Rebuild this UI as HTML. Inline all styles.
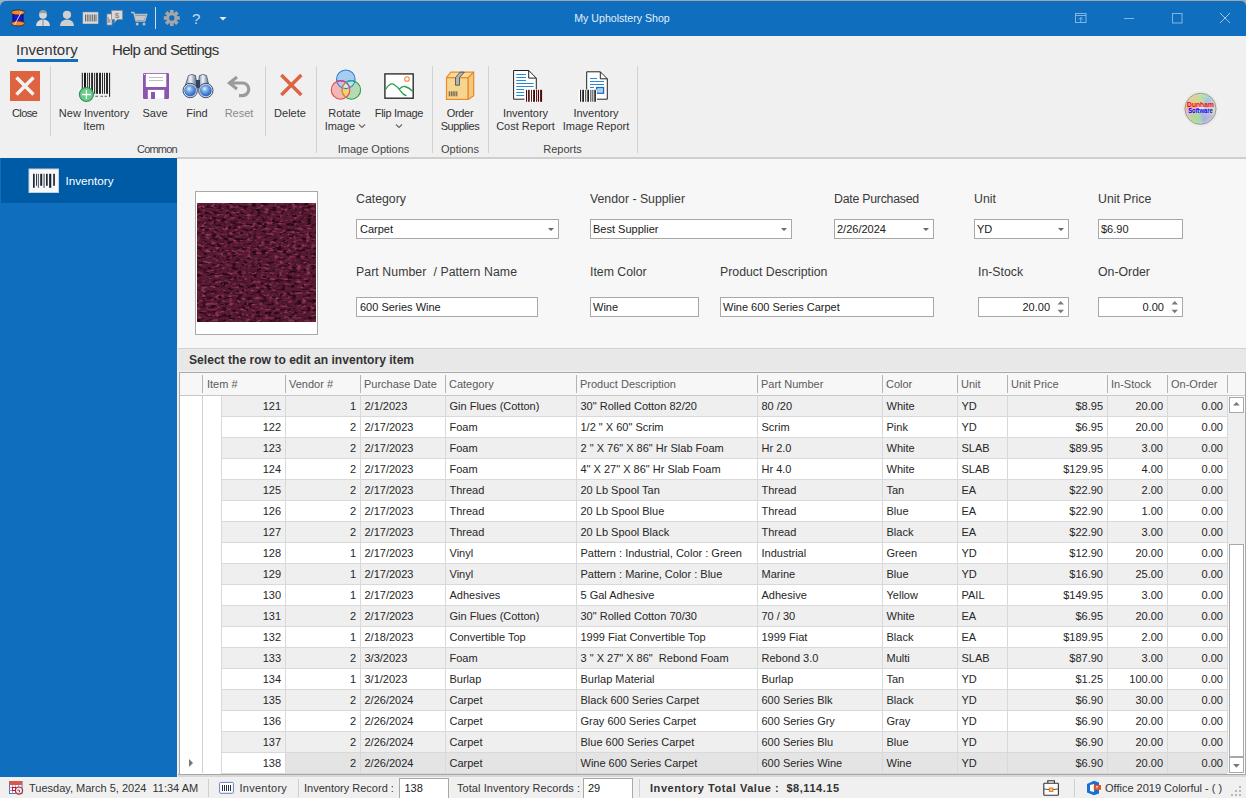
<!DOCTYPE html>
<html><head><meta charset="utf-8">
<style>
*{margin:0;padding:0;box-sizing:border-box}
html,body{width:1246px;height:798px;overflow:hidden;background:#f0f0f0;font-family:"Liberation Sans",sans-serif;font-size:11px;color:#262626;position:relative}
.a{position:absolute;white-space:pre}
</style></head><body>
<div class="a" style="left:0px;top:0px;width:1246px;height:798px;background:#f0f0f0"></div>
<div class="a" style="left:0px;top:0px;width:1246px;height:36px;background:#9ea6b0"></div>
<div class="a" style="left:0px;top:0px;width:8px;height:8px;background:#98b2c8"></div>
<div class="a" style="left:0px;top:1px;width:1246px;height:35px;background:#106ebe;border-radius:6px 5px 0 0"></div>
<div class="a" style="top:10.33px;font-size:10.6px;line-height:16px;color:#e3eefa;left:422px;width:400px;text-align:center;">My Upholstery Shop</div>
<svg class="a" style="left:0;top:0" width="240" height="36" viewBox="0 0 240 36">
<!-- spool -->
<g>
<rect x="13" y="12.5" width="10" height="11" fill="#1414d8" stroke="#000040" stroke-width="0.9"/>
<ellipse cx="18" cy="12.5" rx="6.8" ry="2.5" fill="#f08a3a" stroke="#4a2000" stroke-width="0.8"/>
<ellipse cx="18" cy="23.5" rx="6.8" ry="2.4" fill="#f08a3a" stroke="#4a2000" stroke-width="0.8"/>
</g>
<path d="M14.5 25 L21.5 11.5" stroke="#e8e8f0" stroke-width="0.9"/>
<!-- person 1 -->
<circle cx="43" cy="14.8" r="3.9" fill="#d6d6d6"/>
<path d="M39 13.6 Q39.5 10 43 10 Q46.5 10 47 13.6 Q43 12.2 39 13.6Z" fill="#9c9c9c"/>
<path d="M36 26 Q36.3 20 43 19.6 Q49.7 20 50 26 Z" fill="#dadada"/>
<path d="M42.2 20 h1.6 v6 h-1.6z" fill="#a8a8a8"/>
<!-- person 2 -->
<circle cx="67" cy="14.8" r="4.1" fill="#cfcfcf"/>
<path d="M60 26 Q60.3 20 67 19.6 Q73.7 20 74 26 Z" fill="#cfcfcf"/>
<!-- barcode -->
<rect x="83" y="12.2" width="15" height="11.5" fill="#dcdcdc" stroke="#c4c4c4" stroke-width="0.6"/>
<path d="M85.5 14.5v7M87.3 14.5v7M89 14.5v7M90.8 14.5v7M92.6 14.5v7M94.4 14.5v7M96 14.5v7" stroke="#5e5e5e" stroke-width="0.9"/>
<!-- report $ -->
<path d="M107 14 h5 v11 h-5z" fill="#e0e0e0" stroke="#8a8a8a" stroke-width="0.8"/>
<path d="M108.3 17v6M109.8 19v4" stroke="#6a7a8a" stroke-width="0.8"/>
<path d="M112 24 l3.5 -3" stroke="#3a7ad8" stroke-width="1.2"/>
<path d="M111.5 10.5 h11 v9 h-5 l-3 3 v-3 h-3z" fill="#d8d8d8" stroke="#8a8a8a" stroke-width="0.8"/>
<text x="117" y="18" font-size="8" fill="#777" text-anchor="middle" font-family="Liberation Sans">$</text>
<!-- cart -->
<path d="M131 12.5 h2.8 l2.3 8.5 h8.6 l1.9 -6.5 h-12" fill="none" stroke="#bdbdbd" stroke-width="1.5"/>
<path d="M135 15.5h10.5l-1.4 4.5h-8z" fill="#c6c6c6"/>
<circle cx="137.2" cy="24" r="1.5" fill="#bdbdbd"/><circle cx="144" cy="24" r="1.5" fill="#bdbdbd"/>
<!-- separator -->
<rect x="155" y="7" width="1" height="22" fill="#c8dcf0"/>
<!-- gear -->
<g transform="translate(171.8,18)" fill="#a6a6a6">
<circle r="5.6"/>
<g><rect x="-1.8" y="-8" width="3.6" height="16"/><rect x="-8" y="-1.8" width="16" height="3.6"/>
<rect x="-1.8" y="-8" width="3.6" height="16" transform="rotate(45)"/><rect x="-1.8" y="-8" width="3.6" height="16" transform="rotate(-45)"/></g>
<circle r="2.7" fill="#106ebe"/>
</g>
<!-- ? -->
<text x="196.2" y="23.8" font-size="15" fill="#c8daee" text-anchor="middle" font-family="Liberation Sans">?</text>
<!-- dropdown -->
<path d="M219.5 17 h7 l-3.5 3.5z" fill="#e8eef5"/>
</svg>
<svg class="a" style="left:1060px;top:0" width="186" height="36" viewBox="1060 0 186 36">
<rect x="1075.5" y="13.5" width="10.5" height="9" fill="none" stroke="#86b4e2" stroke-width="1"/>
<path d="M1075.5 15.5h10.5M1080.8 22v-4.5M1078.8 19.5l2-2l2 2" fill="none" stroke="#86b4e2" stroke-width="1"/>
<rect x="1124" y="18" width="10" height="1" fill="#86b4e2"/>
<rect x="1172.5" y="13.5" width="9.5" height="9.5" fill="none" stroke="#86b4e2" stroke-width="1"/>
<path d="M1220 13 l10 10 M1230 13 l-10 10" stroke="#a0c6ec" stroke-width="1"/>
</svg>
<div class="a" style="top:41.80px;font-size:15px;line-height:16px;color:#333;left:16px;">Inventory</div>
<div class="a" style="left:17px;top:59px;width:61px;height:3px;background:#106ebe"></div>
<div class="a" style="top:41.80px;font-size:15px;line-height:16px;color:#333;left:112px;letter-spacing:-0.7px">Help and Settings</div>
<div class="a" style="left:50px;top:66px;width:1px;height:70px;background:#d2d2d2"></div>
<div class="a" style="left:265px;top:66px;width:1px;height:70px;background:#d2d2d2"></div>
<div class="a" style="left:316px;top:66px;width:1px;height:87px;background:#d2d2d2"></div>
<div class="a" style="left:432px;top:66px;width:1px;height:87px;background:#d2d2d2"></div>
<div class="a" style="left:488px;top:66px;width:1px;height:87px;background:#d2d2d2"></div>
<div class="a" style="left:637px;top:66px;width:1px;height:87px;background:#d2d2d2"></div>
<div class="a" style="top:105.19px;font-size:11px;line-height:16px;color:#333;left:-175.5px;width:400px;text-align:center;letter-spacing:-0.631px;">Close</div>
<div class="a" style="top:105.19px;font-size:11px;line-height:16px;color:#333;left:-106px;width:400px;text-align:center;">New Inventory</div>
<div class="a" style="top:118.19px;font-size:11px;line-height:16px;color:#333;left:-106px;width:400px;text-align:center;">Item</div>
<div class="a" style="top:105.19px;font-size:11px;line-height:16px;color:#333;left:-45px;width:400px;text-align:center;">Save</div>
<div class="a" style="top:105.19px;font-size:11px;line-height:16px;color:#333;left:-3px;width:400px;text-align:center;">Find</div>
<div class="a" style="top:105.19px;font-size:11px;line-height:16px;color:#8a8a8a;left:39px;width:400px;text-align:center;">Reset</div>
<div class="a" style="top:105.19px;font-size:11px;line-height:16px;color:#333;left:90px;width:400px;text-align:center;">Delete</div>
<div class="a" style="top:105.19px;font-size:11px;line-height:16px;color:#333;left:144.5px;width:400px;text-align:center;">Rotate</div>
<div class="a" style="top:118.19px;font-size:11px;line-height:16px;color:#333;left:144.5px;width:400px;text-align:center;">Image   </div>
<div class="a" style="top:105.19px;font-size:11px;line-height:16px;color:#333;left:199px;width:400px;text-align:center;letter-spacing:-0.294px;">Flip Image</div>
<div class="a" style="top:105.19px;font-size:11px;line-height:16px;color:#333;left:260px;width:400px;text-align:center;letter-spacing:-0.279px;">Order</div>
<div class="a" style="top:118.19px;font-size:11px;line-height:16px;color:#333;left:260px;width:400px;text-align:center;letter-spacing:-0.456px;">Supplies</div>
<div class="a" style="top:105.19px;font-size:11px;line-height:16px;color:#333;left:325.5px;width:400px;text-align:center;">Inventory</div>
<div class="a" style="top:118.19px;font-size:11px;line-height:16px;color:#333;left:325.5px;width:400px;text-align:center;">Cost Report</div>
<div class="a" style="top:105.19px;font-size:11px;line-height:16px;color:#333;left:396px;width:400px;text-align:center;">Inventory</div>
<div class="a" style="top:118.19px;font-size:11px;line-height:16px;color:#333;left:396px;width:400px;text-align:center;">Image Report</div>
<div class="a" style="top:141.19px;font-size:11px;line-height:16px;color:#444;left:-43.099999999999994px;width:400px;text-align:center;letter-spacing:-0.804px;">Common</div>
<div class="a" style="top:141.19px;font-size:11px;line-height:16px;color:#444;left:173.5px;width:400px;text-align:center;">Image Options</div>
<div class="a" style="top:141.19px;font-size:11px;line-height:16px;color:#444;left:260px;width:400px;text-align:center;">Options</div>
<div class="a" style="top:141.19px;font-size:11px;line-height:16px;color:#444;left:362.5px;width:400px;text-align:center;">Reports</div>
<svg class="a" style="left:0;top:60px" width="660" height="100" viewBox="0 60 660 100">
<!-- close -->
<rect x="10" y="71" width="30" height="30" fill="#dd6341"/>
<path d="M16.5 77.5l17 17M33.5 77.5l-17 17" stroke="#f3f3f3" stroke-width="3.4"/>
<!-- new inventory -->
<g fill="#141414">
<rect x="81.8" y="72.8" width="1" height="21"/><rect x="84" y="72.8" width="2" height="21"/><rect x="87.2" y="72.8" width="0.9" height="21"/>
<rect x="89.1" y="72.8" width="0.9" height="21"/><rect x="91.2" y="72.8" width="1.7" height="21"/><rect x="94.2" y="72.8" width="0.9" height="21"/>
<rect x="96.1" y="72.8" width="1.8" height="21"/><rect x="99.1" y="72.8" width="1.8" height="21"/><rect x="102.1" y="72.8" width="0.9" height="21"/>
<rect x="104.1" y="72.8" width="0.9" height="21"/><rect x="106.1" y="72.8" width="1.8" height="21"/><rect x="109.1" y="72.8" width="1" height="24"/>
</g>
<path d="M95.3 96.3h2.7M100.5 96.3h2.5M104.5 96.3h2.5" stroke="#555" stroke-width="0.9"/>
<circle cx="86.4" cy="94.5" r="7" fill="#6cc98a" stroke="#2a9a50" stroke-width="1.2"/>
<path d="M86.4 90v9M81.9 94.5h9" stroke="#fff" stroke-width="1.3"/>
<!-- save -->
<rect x="143" y="73" width="26" height="26" rx="1.2" fill="#8a56ae"/>
<rect x="145.8" y="73.8" width="20.5" height="13.2" fill="#fff"/>
<path d="M149 77.5h14M149 80.5h14" stroke="#b8b8b8" stroke-width="0.9"/>
<rect x="147.8" y="89.9" width="16.5" height="9" fill="#fff"/>
<rect x="151" y="92" width="4" height="7" fill="#8a56ae"/>
<circle cx="144.4" cy="74.4" r="0.6" fill="#fff"/>
<!-- find binoculars -->
<defs><radialGradient id="lens" cx="0.4" cy="0.35" r="0.65"><stop offset="0" stop-color="#e8f4ff"/><stop offset="0.35" stop-color="#7ab4f0"/><stop offset="1" stop-color="#2a60c0"/></radialGradient>
<linearGradient id="barrel" x1="0" x2="1"><stop offset="0" stop-color="#5a6a88"/><stop offset="0.45" stop-color="#f4f7fb"/><stop offset="1" stop-color="#4a5a78"/></linearGradient></defs>
<path d="M188.5 75.5 Q192 73.5 195.5 75.5 L197.5 88 L184.5 88 Z" fill="url(#barrel)" stroke="#3a4a68" stroke-width="0.7"/>
<path d="M199.5 75.5 Q203 73.5 206.5 75.5 L209.5 88 L197.5 88 Z" fill="url(#barrel)" stroke="#3a4a68" stroke-width="0.7"/>
<rect x="196" y="80" width="4" height="8" fill="#34445e"/>
<circle cx="190.2" cy="90.5" r="7.2" fill="#dfe6f0" stroke="#2a3a60" stroke-width="0.9"/>
<circle cx="205.8" cy="90.5" r="7.2" fill="#dfe6f0" stroke="#2a3a60" stroke-width="0.9"/>
<circle cx="190.2" cy="90.5" r="5.6" fill="url(#lens)" stroke="#3a5a9a" stroke-width="0.5"/>
<circle cx="205.8" cy="90.5" r="5.6" fill="url(#lens)" stroke="#3a5a9a" stroke-width="0.5"/>
<!-- reset -->
<path d="M237 77 L229.5 83 L237 89" fill="none" stroke="#9a9a9a" stroke-width="3.2" stroke-linejoin="miter"/>
<path d="M230 83 H242.5 A6.3 6.3 0 0 1 242.5 95.6 H239" fill="none" stroke="#9a9a9a" stroke-width="3.2"/>
<!-- delete -->
<path d="M281.3 75l20 20M301.3 75l-20 20" stroke="#dd6341" stroke-width="3.4"/>
<!-- rotate circles -->
<defs>
<clipPath id="cB"><circle cx="345.8" cy="79.3" r="9.3"/></clipPath>
<clipPath id="cR"><circle cx="340.6" cy="89.9" r="9.3"/></clipPath>
<clipPath id="cG"><circle cx="351.3" cy="89.9" r="9.3"/></clipPath>
</defs>
<circle cx="345.8" cy="79.3" r="9.3" fill="#a6cdef"/>
<circle cx="340.6" cy="89.9" r="9.3" fill="#f3b5b5"/>
<circle cx="351.3" cy="89.9" r="9.3" fill="#b4dbb4"/>
<g clip-path="url(#cB)"><circle cx="340.6" cy="89.9" r="9.3" fill="#d9b6df"/><circle cx="351.3" cy="89.9" r="9.3" fill="#bfe3e6"/></g>
<g clip-path="url(#cR)"><circle cx="351.3" cy="89.9" r="9.3" fill="#f6cf72"/></g>
<g clip-path="url(#cR)"><g clip-path="url(#cG)"><circle cx="345.8" cy="79.3" r="9.3" fill="#e6e6e6"/></g></g>
<circle cx="345.8" cy="79.3" r="9.3" fill="none" stroke="#2f7fd0" stroke-width="1.1"/>
<circle cx="340.6" cy="89.9" r="9.3" fill="none" stroke="#e04a4a" stroke-width="1.1"/>
<circle cx="351.3" cy="89.9" r="9.3" fill="none" stroke="#2ea24c" stroke-width="1.1"/>
<g clip-path="url(#cB)"><circle cx="340.6" cy="89.9" r="9.3" fill="none" stroke="#9a50b0" stroke-width="1.1"/><circle cx="351.3" cy="89.9" r="9.3" fill="none" stroke="#20a0c0" stroke-width="1.1"/></g>
<g clip-path="url(#cR)"><circle cx="351.3" cy="89.9" r="9.3" fill="none" stroke="#e8902a" stroke-width="1.1"/></g>
<path d="M359 124.5l3 3l3 -3" fill="none" stroke="#6a6a6a" stroke-width="1.2"/>
<path d="M396 124.5l3 3l3 -3" fill="none" stroke="#6a6a6a" stroke-width="1.2"/>
<!-- flip image -->
<rect x="384.9" y="73.9" width="28.3" height="24.3" fill="#fff" stroke="#2e2e2e" stroke-width="1.4"/>
<circle cx="407" cy="79" r="2.3" fill="none" stroke="#ee8a3a" stroke-width="1.1"/>
<path d="M385.5 89.5 Q390 82 394 84.5 Q398 87 401 91.5 Q404 95.5 406.5 95.5" fill="none" stroke="#22a04c" stroke-width="1.3"/>
<path d="M399 89.5 Q402 86 405 86.5 Q409 87.5 413 91.5" fill="none" stroke="#22a04c" stroke-width="1.3"/>
<!-- order supplies -->
<path d="M446.5 77.7 L450.8 72.2 H473.7 L468.2 77.7 Z" fill="#f9dc9a" stroke="#e88a2e" stroke-width="1.2" stroke-linejoin="round"/>
<rect x="446.5" y="77.7" width="21.7" height="21.7" fill="#f6d58e" stroke="#e88a2e" stroke-width="1.2"/>
<path d="M468.2 77.7 L473.7 72.2 V95.7 L468.2 99.4 Z" fill="#f3c878" stroke="#e88a2e" stroke-width="1.2" stroke-linejoin="round"/>
<path d="M455.5 85.2 V77.5 L460 72.2 H464.4 L459.5 77.5 V85.2 Z" fill="#b4b4b4" stroke="#444" stroke-width="0.8"/>
<path d="M449.3 91.3v5M451.3 91.3v5M453.1 91.3v5M454.9 91.3v5M456.8 91.3v5" stroke="#333" stroke-width="0.8"/>
<!-- cost report -->
<path d="M513.6 70.5 H528.7 L536.3 78.1 V99.2 H513.6 Z" fill="#fff" stroke="#222" stroke-width="1"/>
<path d="M528.7 70.5 V78.1 H536.3" fill="none" stroke="#222" stroke-width="1"/>
<path d="M516.3 74.5h9.7M516.3 77.5h9.7M516.3 80.5h9.7M516.3 83.5h17.4M516.3 86.5h17.4M516.3 89.5h8M516.3 92.5h8M516.3 95.5h8" stroke="#2a86d8" stroke-width="1"/>
<rect x="524.5" y="89.5" width="18" height="12.5" fill="#fff"/>
<rect x="526.0" y="89.8" width="1.1" height="12.0" fill="#4a0808"/><rect x="528.1" y="89.8" width="1.6" height="12.0" fill="#4a0808"/><rect x="531.0" y="89.8" width="0.9" height="12.0" fill="#4a0808"/><rect x="533.1" y="89.8" width="1.9" height="12.0" fill="#4a0808"/><rect x="536.1" y="89.8" width="0.9" height="12.0" fill="#4a0808"/><rect x="537.8" y="89.8" width="1.3" height="12.0" fill="#4a0808"/><rect x="540.1" y="89.8" width="2.0" height="12.0" fill="#4a0808"/>
<!-- image report -->
<path d="M586.7 71.8 H600.3 L607.3 78.8 V99.2 H586.7 Z" fill="#fff" stroke="#222" stroke-width="1"/>
<path d="M600.3 71.8 V78.8 H607.3" fill="none" stroke="#222" stroke-width="1"/>
<path d="M590 78.5h7M590 81.5h14M590 84.5h14M590 87.5h4" stroke="#2a86d8" stroke-width="1"/>
<rect x="596.6" y="87.5" width="7" height="5.8" fill="#a8d0f0" stroke="#1a6ac0" stroke-width="1.2"/>
<rect x="578.5" y="89.5" width="18.5" height="12.5" fill="#fff"/>
<rect x="580.0" y="89.8" width="1.1" height="12.0" fill="#222"/><rect x="582.2" y="89.8" width="1.8" height="12.0" fill="#222"/><rect x="585.3" y="89.8" width="0.9" height="12.0" fill="#222"/><rect x="587.3" y="89.8" width="1.7" height="12.0" fill="#222"/><rect x="590.4" y="89.8" width="0.9" height="12.0" fill="#222"/><rect x="592.4" y="89.8" width="0.9" height="12.0" fill="#222"/><rect x="594.3" y="89.8" width="1.6" height="12.0" fill="#222"/>
</svg>
<svg class="a" style="left:1182px;top:91px" width="36" height="36" viewBox="0 0 36 36">
<defs><filter id="bl"><feGaussianBlur stdDeviation="1.6"/></filter></defs>
<g filter="url(#bl)"><path d="M18.5 17.8 L9.75 5.01 A15.5 15.5 0 0 1 17.32 2.35 Z" fill="#d0d890"/><path d="M18.5 17.8 L17.32 2.35 A15.5 15.5 0 0 1 25.20 3.82 Z" fill="#b8dca8"/><path d="M18.5 17.8 L25.20 3.82 A15.5 15.5 0 0 1 31.29 9.05 Z" fill="#a0c8e0"/><path d="M18.5 17.8 L31.29 9.05 A15.5 15.5 0 0 1 33.95 16.62 Z" fill="#c4c8d0"/><path d="M18.5 17.8 L33.95 16.62 A15.5 15.5 0 0 1 32.48 24.50 Z" fill="#d0d8b8"/><path d="M18.5 17.8 L32.48 24.50 A15.5 15.5 0 0 1 27.25 30.59 Z" fill="#b8b8d8"/><path d="M18.5 17.8 L27.25 30.59 A15.5 15.5 0 0 1 19.68 33.25 Z" fill="#a8b0e0"/><path d="M18.5 17.8 L19.68 33.25 A15.5 15.5 0 0 1 11.80 31.78 Z" fill="#a8d8a0"/><path d="M18.5 17.8 L11.80 31.78 A15.5 15.5 0 0 1 5.71 26.55 Z" fill="#b0d890"/><path d="M18.5 17.8 L5.71 26.55 A15.5 15.5 0 0 1 3.05 18.98 Z" fill="#e0b8b0"/><path d="M18.5 17.8 L3.05 18.98 A15.5 15.5 0 0 1 4.52 11.10 Z" fill="#e8a898"/><path d="M18.5 17.8 L4.52 11.10 A15.5 15.5 0 0 1 9.75 5.01 Z" fill="#e0cc90"/></g>
<circle cx="18.5" cy="17.8" r="15.5" fill="none" stroke="#9a9a9a" stroke-width="1"/>
<circle cx="18.5" cy="17.8" r="4.5" fill="#e4e4e4" stroke="#b0b0b0" stroke-width="0.6"/>
<text x="18.5" y="15.8" font-size="7.6" font-weight="bold" fill="#ff0000" text-anchor="middle" font-family="Liberation Sans" textLength="26.8" lengthAdjust="spacingAndGlyphs">Dunham</text>
<text x="18.5" y="22.2" font-size="6.4" font-weight="bold" fill="#0000ff" text-anchor="middle" font-family="Liberation Sans" textLength="24.5" lengthAdjust="spacingAndGlyphs">Software</text>
</svg>
<div class="a" style="left:0px;top:158px;width:177px;height:619px;background:#106ebe"></div>
<div class="a" style="left:1px;top:158px;width:176px;height:45px;background:#005ba6"></div>
<svg class="a" style="left:28px;top:168px" width="32" height="26" viewBox="0 0 32 26">
<rect x="1" y="1" width="29.5" height="23.5" fill="#f7f8fa" stroke="#c8d0dc" stroke-width="1"/>
<rect x="5" y="5.8" width="1.7" height="14" fill="#1e2636"/><rect x="8.100000000000001" y="5.8" width="0.9" height="12" fill="#1e2636"/><rect x="9.899999999999999" y="5.8" width="0.8" height="14" fill="#1e2636"/><rect x="12.200000000000003" y="5.8" width="2.0" height="12" fill="#1e2636"/><rect x="15.600000000000001" y="5.8" width="0.9" height="14" fill="#1e2636"/><rect x="18" y="5.8" width="1.7" height="12" fill="#1e2636"/><rect x="21.1" y="5.8" width="2.2" height="14" fill="#1e2636"/><rect x="25.200000000000003" y="5.8" width="1.7" height="12" fill="#1e2636"/>
</svg>
<div class="a" style="top:173.35px;font-size:11.7px;line-height:16px;color:#ffffff;left:65.5px;">Inventory</div>
<div class="a" style="left:177px;top:158px;width:1069px;height:191px;background:#f7f7f7"></div>
<div class="a" style="left:177px;top:158px;width:1px;height:619px;background:#eeeeee"></div>
<div class="a" style="left:177px;top:157px;width:1069px;height:2px;background:#cfcfcf"></div>
<div class="a" style="left:195px;top:191px;width:123px;height:144px;background:#fff;border:1px solid #a9a9a9"></div>
<svg class="a" style="left:197px;top:203px" width="119" height="119" viewBox="0 0 119 119">
<filter id="carpet" x="0" y="0" width="100%" height="100%" color-interpolation-filters="sRGB"><feTurbulence type="fractalNoise" baseFrequency="0.2 0.34" numOctaves="2" seed="5"/>
<feColorMatrix type="matrix" values="0 0 0 0 0.16  0 0 0 0 0.03  0 0 0 0 0.08  -4.5 0 0 0 2.35"/></filter>
<filter id="carpet2" x="0" y="0" width="100%" height="100%" color-interpolation-filters="sRGB"><feTurbulence type="fractalNoise" baseFrequency="0.22 0.36" numOctaves="2" seed="11"/>
<feColorMatrix type="matrix" values="0 0 0 0 0.56  0 0 0 0 0.2  0 0 0 0 0.36  4.5 0 0 0 -2.4"/></filter>
<rect width="119" height="119" fill="#561a32"/>
<rect width="119" height="119" filter="url(#carpet)"/>
<rect width="119" height="119" filter="url(#carpet2)"/>
</svg>
<div class="a" style="top:190.74px;font-size:12.3px;line-height:16px;color:#3a3a3a;left:356px;">Category</div>
<div class="a" style="top:190.74px;font-size:12.3px;line-height:16px;color:#3a3a3a;left:590px;">Vendor - Supplier</div>
<div class="a" style="top:190.74px;font-size:12.3px;line-height:16px;color:#3a3a3a;left:834px;letter-spacing:-0.231px;">Date Purchased</div>
<div class="a" style="top:190.74px;font-size:12.3px;line-height:16px;color:#3a3a3a;left:974px;">Unit</div>
<div class="a" style="top:190.74px;font-size:12.3px;line-height:16px;color:#3a3a3a;left:1098px;">Unit Price</div>
<div class="a" style="top:263.74px;font-size:12.3px;line-height:16px;color:#3a3a3a;left:356px;letter-spacing:0.067px;">Part Number  / Pattern Name</div>
<div class="a" style="top:263.74px;font-size:12.3px;line-height:16px;color:#3a3a3a;left:590px;">Item Color</div>
<div class="a" style="top:263.74px;font-size:12.3px;line-height:16px;color:#3a3a3a;left:720px;">Product Description</div>
<div class="a" style="top:263.74px;font-size:12.3px;line-height:16px;color:#3a3a3a;left:978px;">In-Stock</div>
<div class="a" style="top:263.74px;font-size:12.3px;line-height:16px;color:#3a3a3a;left:1098px;">On-Order</div>
<div class="a" style="left:356px;top:219px;width:203px;height:20px;background:#fff;border:1px solid #a8a8a8"></div>
<svg class="a" style="left:545px;top:219px" width="12" height="20"><path d="M3 9h6l-3 3z" fill="#666"/></svg>
<div class="a" style="top:221.19px;font-size:11px;line-height:16px;color:#202020;left:360px;">Carpet</div>
<div class="a" style="left:590px;top:219px;width:202px;height:20px;background:#fff;border:1px solid #a8a8a8"></div>
<svg class="a" style="left:778px;top:219px" width="12" height="20"><path d="M3 9h6l-3 3z" fill="#666"/></svg>
<div class="a" style="top:221.19px;font-size:11px;line-height:16px;color:#202020;left:593px;">Best Supplier</div>
<div class="a" style="left:834px;top:219px;width:100px;height:20px;background:#fff;border:1px solid #a8a8a8"></div>
<svg class="a" style="left:920px;top:219px" width="12" height="20"><path d="M3 9h6l-3 3z" fill="#666"/></svg>
<div class="a" style="top:221.19px;font-size:11px;line-height:16px;color:#202020;left:837px;">2/26/2024</div>
<div class="a" style="left:974px;top:219px;width:95px;height:20px;background:#fff;border:1px solid #a8a8a8"></div>
<svg class="a" style="left:1055px;top:219px" width="12" height="20"><path d="M3 9h6l-3 3z" fill="#666"/></svg>
<div class="a" style="top:221.19px;font-size:11px;line-height:16px;color:#202020;left:977px;">YD</div>
<div class="a" style="left:1098px;top:219px;width:85px;height:20px;background:#fff;border:1px solid #a8a8a8"></div>
<div class="a" style="top:221.19px;font-size:11px;line-height:16px;color:#202020;left:1101px;">$6.90</div>
<div class="a" style="left:356px;top:297px;width:182px;height:20px;background:#fff;border:1px solid #a8a8a8"></div>
<div class="a" style="top:299.19px;font-size:11px;line-height:16px;color:#202020;left:360px;">600 Series Wine</div>
<div class="a" style="left:590px;top:297px;width:109px;height:20px;background:#fff;border:1px solid #a8a8a8"></div>
<div class="a" style="top:299.19px;font-size:11px;line-height:16px;color:#202020;left:593px;">Wine</div>
<div class="a" style="left:720px;top:297px;width:214px;height:20px;background:#fff;border:1px solid #a8a8a8"></div>
<div class="a" style="top:299.19px;font-size:11px;line-height:16px;color:#202020;left:723px;">Wine 600 Series Carpet</div>
<div class="a" style="left:978px;top:297px;width:91px;height:20px;background:#fff;border:1px solid #a8a8a8"></div>
<svg class="a" style="left:1057px;top:297px" width="12" height="20"><path d="M0.5 7.5h6.5l-3.25 -3.5z M0.5 12.7h6.5l-3.25 3.5z" fill="#7a7a7a"/></svg>
<div class="a" style="top:299.19px;font-size:11px;line-height:16px;color:#202020;right:196px;text-align:right;">20.00</div>
<div class="a" style="left:1098px;top:297px;width:85px;height:20px;background:#fff;border:1px solid #a8a8a8"></div>
<svg class="a" style="left:1171px;top:297px" width="12" height="20"><path d="M0.5 7.5h6.5l-3.25 -3.5z M0.5 12.7h6.5l-3.25 3.5z" fill="#7a7a7a"/></svg>
<div class="a" style="top:299.19px;font-size:11px;line-height:16px;color:#202020;right:82px;text-align:right;">0.00</div>
<div class="a" style="left:178px;top:348px;width:1068px;height:1px;background:#d0d0d0"></div>
<div class="a" style="left:178px;top:349px;width:1068px;height:22px;background:#e8e8e8"></div>
<div class="a" style="top:352.11px;font-size:12.1px;line-height:16px;color:#333;font-weight:bold;left:189px;">Select the row to edit an inventory item</div>
<div class="a" style="left:179px;top:372px;width:1067px;height:403px;background:#fff;border:1px solid #a8a8a8"></div>
<div class="a" style="left:180px;top:373px;width:1065px;height:22px;background:#f7f7f7"></div>
<div class="a" style="left:180px;top:395px;width:1065px;height:1px;background:#c8c8c8"></div>
<div class="a" style="top:376.49px;font-size:11px;line-height:16px;color:#5a5a5a;left:207px;">Item #</div>
<div class="a" style="top:376.49px;font-size:11px;line-height:16px;color:#5a5a5a;left:289px;">Vendor #</div>
<div class="a" style="top:376.49px;font-size:11px;line-height:16px;color:#5a5a5a;left:364px;">Purchase Date</div>
<div class="a" style="top:376.49px;font-size:11px;line-height:16px;color:#5a5a5a;left:449px;">Category</div>
<div class="a" style="top:376.49px;font-size:11px;line-height:16px;color:#5a5a5a;left:580px;">Product Description</div>
<div class="a" style="top:376.49px;font-size:11px;line-height:16px;color:#5a5a5a;left:761px;">Part Number</div>
<div class="a" style="top:376.49px;font-size:11px;line-height:16px;color:#5a5a5a;left:886px;">Color</div>
<div class="a" style="top:376.49px;font-size:11px;line-height:16px;color:#5a5a5a;left:961px;">Unit</div>
<div class="a" style="top:376.49px;font-size:11px;line-height:16px;color:#5a5a5a;left:1011px;">Unit Price</div>
<div class="a" style="top:376.49px;font-size:11px;line-height:16px;color:#5a5a5a;left:1111px;">In-Stock</div>
<div class="a" style="top:376.49px;font-size:11px;line-height:16px;color:#5a5a5a;left:1171px;">On-Order</div>
<div class="a" style="left:202px;top:375px;width:1px;height:18px;background:#b4b4b4"></div>
<div class="a" style="left:285px;top:375px;width:1px;height:18px;background:#b4b4b4"></div>
<div class="a" style="left:360px;top:375px;width:1px;height:18px;background:#b4b4b4"></div>
<div class="a" style="left:445px;top:375px;width:1px;height:18px;background:#b4b4b4"></div>
<div class="a" style="left:576px;top:375px;width:1px;height:18px;background:#b4b4b4"></div>
<div class="a" style="left:757px;top:375px;width:1px;height:18px;background:#b4b4b4"></div>
<div class="a" style="left:882px;top:375px;width:1px;height:18px;background:#b4b4b4"></div>
<div class="a" style="left:957px;top:375px;width:1px;height:18px;background:#b4b4b4"></div>
<div class="a" style="left:1007px;top:375px;width:1px;height:18px;background:#b4b4b4"></div>
<div class="a" style="left:1107px;top:375px;width:1px;height:18px;background:#b4b4b4"></div>
<div class="a" style="left:1167px;top:375px;width:1px;height:18px;background:#b4b4b4"></div>
<div class="a" style="left:1227px;top:375px;width:1px;height:18px;background:#b4b4b4"></div>
<div class="a" style="left:222px;top:396px;width:1005px;height:20px;background:#efefef"></div>
<div class="a" style="top:398.19px;font-size:11px;line-height:16px;color:#262626;right:965px;text-align:right;">121</div>
<div class="a" style="top:398.19px;font-size:11px;line-height:16px;color:#262626;right:890px;text-align:right;">1</div>
<div class="a" style="top:398.19px;font-size:11px;line-height:16px;color:#262626;left:364.5px;">2/1/2023</div>
<div class="a" style="top:398.19px;font-size:11px;line-height:16px;color:#262626;left:449.5px;">Gin Flues (Cotton)</div>
<div class="a" style="top:398.19px;font-size:11px;line-height:16px;color:#262626;left:580.5px;">30" Rolled Cotton 82/20</div>
<div class="a" style="top:398.19px;font-size:11px;line-height:16px;color:#262626;left:761.5px;">80 /20</div>
<div class="a" style="top:398.19px;font-size:11px;line-height:16px;color:#262626;left:886.5px;">White</div>
<div class="a" style="top:398.19px;font-size:11px;line-height:16px;color:#262626;left:961.5px;">YD</div>
<div class="a" style="top:398.19px;font-size:11px;line-height:16px;color:#262626;right:143px;text-align:right;">$8.95</div>
<div class="a" style="top:398.19px;font-size:11px;line-height:16px;color:#262626;right:83px;text-align:right;">20.00</div>
<div class="a" style="top:398.19px;font-size:11px;line-height:16px;color:#262626;right:23px;text-align:right;">0.00</div>
<div class="a" style="left:222px;top:417px;width:1005px;height:20px;background:#ffffff"></div>
<div class="a" style="top:419.19px;font-size:11px;line-height:16px;color:#262626;right:965px;text-align:right;">122</div>
<div class="a" style="top:419.19px;font-size:11px;line-height:16px;color:#262626;right:890px;text-align:right;">2</div>
<div class="a" style="top:419.19px;font-size:11px;line-height:16px;color:#262626;left:364.5px;">2/17/2023</div>
<div class="a" style="top:419.19px;font-size:11px;line-height:16px;color:#262626;left:449.5px;">Foam</div>
<div class="a" style="top:419.19px;font-size:11px;line-height:16px;color:#262626;left:580.5px;">1/2 " X 60" Scrim</div>
<div class="a" style="top:419.19px;font-size:11px;line-height:16px;color:#262626;left:761.5px;">Scrim</div>
<div class="a" style="top:419.19px;font-size:11px;line-height:16px;color:#262626;left:886.5px;">Pink</div>
<div class="a" style="top:419.19px;font-size:11px;line-height:16px;color:#262626;left:961.5px;">YD</div>
<div class="a" style="top:419.19px;font-size:11px;line-height:16px;color:#262626;right:143px;text-align:right;">$6.95</div>
<div class="a" style="top:419.19px;font-size:11px;line-height:16px;color:#262626;right:83px;text-align:right;">20.00</div>
<div class="a" style="top:419.19px;font-size:11px;line-height:16px;color:#262626;right:23px;text-align:right;">0.00</div>
<div class="a" style="left:222px;top:438px;width:1005px;height:20px;background:#efefef"></div>
<div class="a" style="top:440.19px;font-size:11px;line-height:16px;color:#262626;right:965px;text-align:right;">123</div>
<div class="a" style="top:440.19px;font-size:11px;line-height:16px;color:#262626;right:890px;text-align:right;">2</div>
<div class="a" style="top:440.19px;font-size:11px;line-height:16px;color:#262626;left:364.5px;">2/17/2023</div>
<div class="a" style="top:440.19px;font-size:11px;line-height:16px;color:#262626;left:449.5px;">Foam</div>
<div class="a" style="top:440.19px;font-size:11px;line-height:16px;color:#262626;left:580.5px;">2 " X 76" X 86" Hr Slab Foam</div>
<div class="a" style="top:440.19px;font-size:11px;line-height:16px;color:#262626;left:761.5px;">Hr 2.0</div>
<div class="a" style="top:440.19px;font-size:11px;line-height:16px;color:#262626;left:886.5px;">White</div>
<div class="a" style="top:440.19px;font-size:11px;line-height:16px;color:#262626;left:961.5px;">SLAB</div>
<div class="a" style="top:440.19px;font-size:11px;line-height:16px;color:#262626;right:143px;text-align:right;">$89.95</div>
<div class="a" style="top:440.19px;font-size:11px;line-height:16px;color:#262626;right:83px;text-align:right;">3.00</div>
<div class="a" style="top:440.19px;font-size:11px;line-height:16px;color:#262626;right:23px;text-align:right;">0.00</div>
<div class="a" style="left:222px;top:459px;width:1005px;height:20px;background:#ffffff"></div>
<div class="a" style="top:461.19px;font-size:11px;line-height:16px;color:#262626;right:965px;text-align:right;">124</div>
<div class="a" style="top:461.19px;font-size:11px;line-height:16px;color:#262626;right:890px;text-align:right;">2</div>
<div class="a" style="top:461.19px;font-size:11px;line-height:16px;color:#262626;left:364.5px;">2/17/2023</div>
<div class="a" style="top:461.19px;font-size:11px;line-height:16px;color:#262626;left:449.5px;">Foam</div>
<div class="a" style="top:461.19px;font-size:11px;line-height:16px;color:#262626;left:580.5px;">4" X 27" X 86" Hr Slab Foam</div>
<div class="a" style="top:461.19px;font-size:11px;line-height:16px;color:#262626;left:761.5px;">Hr 4.0</div>
<div class="a" style="top:461.19px;font-size:11px;line-height:16px;color:#262626;left:886.5px;">White</div>
<div class="a" style="top:461.19px;font-size:11px;line-height:16px;color:#262626;left:961.5px;">SLAB</div>
<div class="a" style="top:461.19px;font-size:11px;line-height:16px;color:#262626;right:143px;text-align:right;">$129.95</div>
<div class="a" style="top:461.19px;font-size:11px;line-height:16px;color:#262626;right:83px;text-align:right;">4.00</div>
<div class="a" style="top:461.19px;font-size:11px;line-height:16px;color:#262626;right:23px;text-align:right;">0.00</div>
<div class="a" style="left:222px;top:480px;width:1005px;height:20px;background:#efefef"></div>
<div class="a" style="top:482.19px;font-size:11px;line-height:16px;color:#262626;right:965px;text-align:right;">125</div>
<div class="a" style="top:482.19px;font-size:11px;line-height:16px;color:#262626;right:890px;text-align:right;">2</div>
<div class="a" style="top:482.19px;font-size:11px;line-height:16px;color:#262626;left:364.5px;">2/17/2023</div>
<div class="a" style="top:482.19px;font-size:11px;line-height:16px;color:#262626;left:449.5px;">Thread</div>
<div class="a" style="top:482.19px;font-size:11px;line-height:16px;color:#262626;left:580.5px;">20 Lb Spool Tan</div>
<div class="a" style="top:482.19px;font-size:11px;line-height:16px;color:#262626;left:761.5px;">Thread</div>
<div class="a" style="top:482.19px;font-size:11px;line-height:16px;color:#262626;left:886.5px;">Tan</div>
<div class="a" style="top:482.19px;font-size:11px;line-height:16px;color:#262626;left:961.5px;">EA</div>
<div class="a" style="top:482.19px;font-size:11px;line-height:16px;color:#262626;right:143px;text-align:right;">$22.90</div>
<div class="a" style="top:482.19px;font-size:11px;line-height:16px;color:#262626;right:83px;text-align:right;">2.00</div>
<div class="a" style="top:482.19px;font-size:11px;line-height:16px;color:#262626;right:23px;text-align:right;">0.00</div>
<div class="a" style="left:222px;top:501px;width:1005px;height:20px;background:#ffffff"></div>
<div class="a" style="top:503.19px;font-size:11px;line-height:16px;color:#262626;right:965px;text-align:right;">126</div>
<div class="a" style="top:503.19px;font-size:11px;line-height:16px;color:#262626;right:890px;text-align:right;">2</div>
<div class="a" style="top:503.19px;font-size:11px;line-height:16px;color:#262626;left:364.5px;">2/17/2023</div>
<div class="a" style="top:503.19px;font-size:11px;line-height:16px;color:#262626;left:449.5px;">Thread</div>
<div class="a" style="top:503.19px;font-size:11px;line-height:16px;color:#262626;left:580.5px;">20 Lb Spool Blue</div>
<div class="a" style="top:503.19px;font-size:11px;line-height:16px;color:#262626;left:761.5px;">Thread</div>
<div class="a" style="top:503.19px;font-size:11px;line-height:16px;color:#262626;left:886.5px;">Blue</div>
<div class="a" style="top:503.19px;font-size:11px;line-height:16px;color:#262626;left:961.5px;">EA</div>
<div class="a" style="top:503.19px;font-size:11px;line-height:16px;color:#262626;right:143px;text-align:right;">$22.90</div>
<div class="a" style="top:503.19px;font-size:11px;line-height:16px;color:#262626;right:83px;text-align:right;">1.00</div>
<div class="a" style="top:503.19px;font-size:11px;line-height:16px;color:#262626;right:23px;text-align:right;">0.00</div>
<div class="a" style="left:222px;top:522px;width:1005px;height:20px;background:#efefef"></div>
<div class="a" style="top:524.19px;font-size:11px;line-height:16px;color:#262626;right:965px;text-align:right;">127</div>
<div class="a" style="top:524.19px;font-size:11px;line-height:16px;color:#262626;right:890px;text-align:right;">2</div>
<div class="a" style="top:524.19px;font-size:11px;line-height:16px;color:#262626;left:364.5px;">2/17/2023</div>
<div class="a" style="top:524.19px;font-size:11px;line-height:16px;color:#262626;left:449.5px;">Thread</div>
<div class="a" style="top:524.19px;font-size:11px;line-height:16px;color:#262626;left:580.5px;">20 Lb Spool Black</div>
<div class="a" style="top:524.19px;font-size:11px;line-height:16px;color:#262626;left:761.5px;">Thread</div>
<div class="a" style="top:524.19px;font-size:11px;line-height:16px;color:#262626;left:886.5px;">Black</div>
<div class="a" style="top:524.19px;font-size:11px;line-height:16px;color:#262626;left:961.5px;">EA</div>
<div class="a" style="top:524.19px;font-size:11px;line-height:16px;color:#262626;right:143px;text-align:right;">$22.90</div>
<div class="a" style="top:524.19px;font-size:11px;line-height:16px;color:#262626;right:83px;text-align:right;">3.00</div>
<div class="a" style="top:524.19px;font-size:11px;line-height:16px;color:#262626;right:23px;text-align:right;">0.00</div>
<div class="a" style="left:222px;top:543px;width:1005px;height:20px;background:#ffffff"></div>
<div class="a" style="top:545.19px;font-size:11px;line-height:16px;color:#262626;right:965px;text-align:right;">128</div>
<div class="a" style="top:545.19px;font-size:11px;line-height:16px;color:#262626;right:890px;text-align:right;">1</div>
<div class="a" style="top:545.19px;font-size:11px;line-height:16px;color:#262626;left:364.5px;">2/17/2023</div>
<div class="a" style="top:545.19px;font-size:11px;line-height:16px;color:#262626;left:449.5px;">Vinyl</div>
<div class="a" style="top:545.19px;font-size:11px;line-height:16px;color:#262626;left:580.5px;">Pattern : Industrial, Color : Green</div>
<div class="a" style="top:545.19px;font-size:11px;line-height:16px;color:#262626;left:761.5px;">Industrial</div>
<div class="a" style="top:545.19px;font-size:11px;line-height:16px;color:#262626;left:886.5px;">Green</div>
<div class="a" style="top:545.19px;font-size:11px;line-height:16px;color:#262626;left:961.5px;">YD</div>
<div class="a" style="top:545.19px;font-size:11px;line-height:16px;color:#262626;right:143px;text-align:right;">$12.90</div>
<div class="a" style="top:545.19px;font-size:11px;line-height:16px;color:#262626;right:83px;text-align:right;">20.00</div>
<div class="a" style="top:545.19px;font-size:11px;line-height:16px;color:#262626;right:23px;text-align:right;">0.00</div>
<div class="a" style="left:222px;top:564px;width:1005px;height:20px;background:#efefef"></div>
<div class="a" style="top:566.19px;font-size:11px;line-height:16px;color:#262626;right:965px;text-align:right;">129</div>
<div class="a" style="top:566.19px;font-size:11px;line-height:16px;color:#262626;right:890px;text-align:right;">1</div>
<div class="a" style="top:566.19px;font-size:11px;line-height:16px;color:#262626;left:364.5px;">2/17/2023</div>
<div class="a" style="top:566.19px;font-size:11px;line-height:16px;color:#262626;left:449.5px;">Vinyl</div>
<div class="a" style="top:566.19px;font-size:11px;line-height:16px;color:#262626;left:580.5px;">Pattern : Marine, Color : Blue</div>
<div class="a" style="top:566.19px;font-size:11px;line-height:16px;color:#262626;left:761.5px;">Marine</div>
<div class="a" style="top:566.19px;font-size:11px;line-height:16px;color:#262626;left:886.5px;">Blue</div>
<div class="a" style="top:566.19px;font-size:11px;line-height:16px;color:#262626;left:961.5px;">YD</div>
<div class="a" style="top:566.19px;font-size:11px;line-height:16px;color:#262626;right:143px;text-align:right;">$16.90</div>
<div class="a" style="top:566.19px;font-size:11px;line-height:16px;color:#262626;right:83px;text-align:right;">25.00</div>
<div class="a" style="top:566.19px;font-size:11px;line-height:16px;color:#262626;right:23px;text-align:right;">0.00</div>
<div class="a" style="left:222px;top:585px;width:1005px;height:20px;background:#ffffff"></div>
<div class="a" style="top:587.19px;font-size:11px;line-height:16px;color:#262626;right:965px;text-align:right;">130</div>
<div class="a" style="top:587.19px;font-size:11px;line-height:16px;color:#262626;right:890px;text-align:right;">1</div>
<div class="a" style="top:587.19px;font-size:11px;line-height:16px;color:#262626;left:364.5px;">2/17/2023</div>
<div class="a" style="top:587.19px;font-size:11px;line-height:16px;color:#262626;left:449.5px;">Adhesives</div>
<div class="a" style="top:587.19px;font-size:11px;line-height:16px;color:#262626;left:580.5px;">5 Gal Adhesive</div>
<div class="a" style="top:587.19px;font-size:11px;line-height:16px;color:#262626;left:761.5px;">Adhesive</div>
<div class="a" style="top:587.19px;font-size:11px;line-height:16px;color:#262626;left:886.5px;">Yellow</div>
<div class="a" style="top:587.19px;font-size:11px;line-height:16px;color:#262626;left:961.5px;">PAIL</div>
<div class="a" style="top:587.19px;font-size:11px;line-height:16px;color:#262626;right:143px;text-align:right;">$149.95</div>
<div class="a" style="top:587.19px;font-size:11px;line-height:16px;color:#262626;right:83px;text-align:right;">3.00</div>
<div class="a" style="top:587.19px;font-size:11px;line-height:16px;color:#262626;right:23px;text-align:right;">0.00</div>
<div class="a" style="left:222px;top:606px;width:1005px;height:20px;background:#efefef"></div>
<div class="a" style="top:608.19px;font-size:11px;line-height:16px;color:#262626;right:965px;text-align:right;">131</div>
<div class="a" style="top:608.19px;font-size:11px;line-height:16px;color:#262626;right:890px;text-align:right;">2</div>
<div class="a" style="top:608.19px;font-size:11px;line-height:16px;color:#262626;left:364.5px;">2/17/2023</div>
<div class="a" style="top:608.19px;font-size:11px;line-height:16px;color:#262626;left:449.5px;">Gin Flues (Cotton)</div>
<div class="a" style="top:608.19px;font-size:11px;line-height:16px;color:#262626;left:580.5px;">30" Rolled Cotton 70/30</div>
<div class="a" style="top:608.19px;font-size:11px;line-height:16px;color:#262626;left:761.5px;">70 / 30</div>
<div class="a" style="top:608.19px;font-size:11px;line-height:16px;color:#262626;left:886.5px;">White</div>
<div class="a" style="top:608.19px;font-size:11px;line-height:16px;color:#262626;left:961.5px;">EA</div>
<div class="a" style="top:608.19px;font-size:11px;line-height:16px;color:#262626;right:143px;text-align:right;">$6.95</div>
<div class="a" style="top:608.19px;font-size:11px;line-height:16px;color:#262626;right:83px;text-align:right;">20.00</div>
<div class="a" style="top:608.19px;font-size:11px;line-height:16px;color:#262626;right:23px;text-align:right;">0.00</div>
<div class="a" style="left:222px;top:627px;width:1005px;height:20px;background:#ffffff"></div>
<div class="a" style="top:629.19px;font-size:11px;line-height:16px;color:#262626;right:965px;text-align:right;">132</div>
<div class="a" style="top:629.19px;font-size:11px;line-height:16px;color:#262626;right:890px;text-align:right;">1</div>
<div class="a" style="top:629.19px;font-size:11px;line-height:16px;color:#262626;left:364.5px;">2/18/2023</div>
<div class="a" style="top:629.19px;font-size:11px;line-height:16px;color:#262626;left:449.5px;">Convertible Top</div>
<div class="a" style="top:629.19px;font-size:11px;line-height:16px;color:#262626;left:580.5px;">1999 Fiat Convertible Top</div>
<div class="a" style="top:629.19px;font-size:11px;line-height:16px;color:#262626;left:761.5px;">1999 Fiat</div>
<div class="a" style="top:629.19px;font-size:11px;line-height:16px;color:#262626;left:886.5px;">Black</div>
<div class="a" style="top:629.19px;font-size:11px;line-height:16px;color:#262626;left:961.5px;">EA</div>
<div class="a" style="top:629.19px;font-size:11px;line-height:16px;color:#262626;right:143px;text-align:right;">$189.95</div>
<div class="a" style="top:629.19px;font-size:11px;line-height:16px;color:#262626;right:83px;text-align:right;">2.00</div>
<div class="a" style="top:629.19px;font-size:11px;line-height:16px;color:#262626;right:23px;text-align:right;">0.00</div>
<div class="a" style="left:222px;top:648px;width:1005px;height:20px;background:#efefef"></div>
<div class="a" style="top:650.19px;font-size:11px;line-height:16px;color:#262626;right:965px;text-align:right;">133</div>
<div class="a" style="top:650.19px;font-size:11px;line-height:16px;color:#262626;right:890px;text-align:right;">2</div>
<div class="a" style="top:650.19px;font-size:11px;line-height:16px;color:#262626;left:364.5px;">3/3/2023</div>
<div class="a" style="top:650.19px;font-size:11px;line-height:16px;color:#262626;left:449.5px;">Foam</div>
<div class="a" style="top:650.19px;font-size:11px;line-height:16px;color:#262626;left:580.5px;">3 " X 27" X 86"  Rebond Foam</div>
<div class="a" style="top:650.19px;font-size:11px;line-height:16px;color:#262626;left:761.5px;">Rebond 3.0</div>
<div class="a" style="top:650.19px;font-size:11px;line-height:16px;color:#262626;left:886.5px;">Multi</div>
<div class="a" style="top:650.19px;font-size:11px;line-height:16px;color:#262626;left:961.5px;">SLAB</div>
<div class="a" style="top:650.19px;font-size:11px;line-height:16px;color:#262626;right:143px;text-align:right;">$87.90</div>
<div class="a" style="top:650.19px;font-size:11px;line-height:16px;color:#262626;right:83px;text-align:right;">3.00</div>
<div class="a" style="top:650.19px;font-size:11px;line-height:16px;color:#262626;right:23px;text-align:right;">0.00</div>
<div class="a" style="left:222px;top:669px;width:1005px;height:20px;background:#ffffff"></div>
<div class="a" style="top:671.19px;font-size:11px;line-height:16px;color:#262626;right:965px;text-align:right;">134</div>
<div class="a" style="top:671.19px;font-size:11px;line-height:16px;color:#262626;right:890px;text-align:right;">1</div>
<div class="a" style="top:671.19px;font-size:11px;line-height:16px;color:#262626;left:364.5px;">3/1/2023</div>
<div class="a" style="top:671.19px;font-size:11px;line-height:16px;color:#262626;left:449.5px;">Burlap</div>
<div class="a" style="top:671.19px;font-size:11px;line-height:16px;color:#262626;left:580.5px;">Burlap Material</div>
<div class="a" style="top:671.19px;font-size:11px;line-height:16px;color:#262626;left:761.5px;">Burlap</div>
<div class="a" style="top:671.19px;font-size:11px;line-height:16px;color:#262626;left:886.5px;">Tan</div>
<div class="a" style="top:671.19px;font-size:11px;line-height:16px;color:#262626;left:961.5px;">YD</div>
<div class="a" style="top:671.19px;font-size:11px;line-height:16px;color:#262626;right:143px;text-align:right;">$1.25</div>
<div class="a" style="top:671.19px;font-size:11px;line-height:16px;color:#262626;right:83px;text-align:right;">100.00</div>
<div class="a" style="top:671.19px;font-size:11px;line-height:16px;color:#262626;right:23px;text-align:right;">0.00</div>
<div class="a" style="left:222px;top:690px;width:1005px;height:20px;background:#efefef"></div>
<div class="a" style="top:692.19px;font-size:11px;line-height:16px;color:#262626;right:965px;text-align:right;">135</div>
<div class="a" style="top:692.19px;font-size:11px;line-height:16px;color:#262626;right:890px;text-align:right;">2</div>
<div class="a" style="top:692.19px;font-size:11px;line-height:16px;color:#262626;left:364.5px;">2/26/2024</div>
<div class="a" style="top:692.19px;font-size:11px;line-height:16px;color:#262626;left:449.5px;">Carpet</div>
<div class="a" style="top:692.19px;font-size:11px;line-height:16px;color:#262626;left:580.5px;">Black 600 Series Carpet</div>
<div class="a" style="top:692.19px;font-size:11px;line-height:16px;color:#262626;left:761.5px;">600 Series Blk</div>
<div class="a" style="top:692.19px;font-size:11px;line-height:16px;color:#262626;left:886.5px;">Black</div>
<div class="a" style="top:692.19px;font-size:11px;line-height:16px;color:#262626;left:961.5px;">YD</div>
<div class="a" style="top:692.19px;font-size:11px;line-height:16px;color:#262626;right:143px;text-align:right;">$6.90</div>
<div class="a" style="top:692.19px;font-size:11px;line-height:16px;color:#262626;right:83px;text-align:right;">30.00</div>
<div class="a" style="top:692.19px;font-size:11px;line-height:16px;color:#262626;right:23px;text-align:right;">0.00</div>
<div class="a" style="left:222px;top:711px;width:1005px;height:20px;background:#ffffff"></div>
<div class="a" style="top:713.19px;font-size:11px;line-height:16px;color:#262626;right:965px;text-align:right;">136</div>
<div class="a" style="top:713.19px;font-size:11px;line-height:16px;color:#262626;right:890px;text-align:right;">2</div>
<div class="a" style="top:713.19px;font-size:11px;line-height:16px;color:#262626;left:364.5px;">2/26/2024</div>
<div class="a" style="top:713.19px;font-size:11px;line-height:16px;color:#262626;left:449.5px;">Carpet</div>
<div class="a" style="top:713.19px;font-size:11px;line-height:16px;color:#262626;left:580.5px;">Gray 600 Series Carpet</div>
<div class="a" style="top:713.19px;font-size:11px;line-height:16px;color:#262626;left:761.5px;">600 Series Gry</div>
<div class="a" style="top:713.19px;font-size:11px;line-height:16px;color:#262626;left:886.5px;">Gray</div>
<div class="a" style="top:713.19px;font-size:11px;line-height:16px;color:#262626;left:961.5px;">YD</div>
<div class="a" style="top:713.19px;font-size:11px;line-height:16px;color:#262626;right:143px;text-align:right;">$6.90</div>
<div class="a" style="top:713.19px;font-size:11px;line-height:16px;color:#262626;right:83px;text-align:right;">20.00</div>
<div class="a" style="top:713.19px;font-size:11px;line-height:16px;color:#262626;right:23px;text-align:right;">0.00</div>
<div class="a" style="left:222px;top:732px;width:1005px;height:20px;background:#efefef"></div>
<div class="a" style="top:734.19px;font-size:11px;line-height:16px;color:#262626;right:965px;text-align:right;">137</div>
<div class="a" style="top:734.19px;font-size:11px;line-height:16px;color:#262626;right:890px;text-align:right;">2</div>
<div class="a" style="top:734.19px;font-size:11px;line-height:16px;color:#262626;left:364.5px;">2/26/2024</div>
<div class="a" style="top:734.19px;font-size:11px;line-height:16px;color:#262626;left:449.5px;">Carpet</div>
<div class="a" style="top:734.19px;font-size:11px;line-height:16px;color:#262626;left:580.5px;">Blue 600 Series Carpet</div>
<div class="a" style="top:734.19px;font-size:11px;line-height:16px;color:#262626;left:761.5px;">600 Series Blu</div>
<div class="a" style="top:734.19px;font-size:11px;line-height:16px;color:#262626;left:886.5px;">Blue</div>
<div class="a" style="top:734.19px;font-size:11px;line-height:16px;color:#262626;left:961.5px;">YD</div>
<div class="a" style="top:734.19px;font-size:11px;line-height:16px;color:#262626;right:143px;text-align:right;">$6.90</div>
<div class="a" style="top:734.19px;font-size:11px;line-height:16px;color:#262626;right:83px;text-align:right;">20.00</div>
<div class="a" style="top:734.19px;font-size:11px;line-height:16px;color:#262626;right:23px;text-align:right;">0.00</div>
<div class="a" style="left:222px;top:753px;width:1005px;height:20px;background:#e4e4e4"></div>
<div class="a" style="left:222px;top:753px;width:63px;height:20px;background:#fff"></div>
<div class="a" style="top:755.19px;font-size:11px;line-height:16px;color:#262626;right:965px;text-align:right;">138</div>
<div class="a" style="top:755.19px;font-size:11px;line-height:16px;color:#262626;right:890px;text-align:right;">2</div>
<div class="a" style="top:755.19px;font-size:11px;line-height:16px;color:#262626;left:364.5px;">2/26/2024</div>
<div class="a" style="top:755.19px;font-size:11px;line-height:16px;color:#262626;left:449.5px;">Carpet</div>
<div class="a" style="top:755.19px;font-size:11px;line-height:16px;color:#262626;left:580.5px;">Wine 600 Series Carpet</div>
<div class="a" style="top:755.19px;font-size:11px;line-height:16px;color:#262626;left:761.5px;">600 Series Wine</div>
<div class="a" style="top:755.19px;font-size:11px;line-height:16px;color:#262626;left:886.5px;">Wine</div>
<div class="a" style="top:755.19px;font-size:11px;line-height:16px;color:#262626;left:961.5px;">YD</div>
<div class="a" style="top:755.19px;font-size:11px;line-height:16px;color:#262626;right:143px;text-align:right;">$6.90</div>
<div class="a" style="top:755.19px;font-size:11px;line-height:16px;color:#262626;right:83px;text-align:right;">20.00</div>
<div class="a" style="top:755.19px;font-size:11px;line-height:16px;color:#262626;right:23px;text-align:right;">0.00</div>
<div class="a" style="left:221px;top:416px;width:1006px;height:1px;background:#d9d9d9"></div>
<div class="a" style="left:221px;top:437px;width:1006px;height:1px;background:#d9d9d9"></div>
<div class="a" style="left:221px;top:458px;width:1006px;height:1px;background:#d9d9d9"></div>
<div class="a" style="left:221px;top:479px;width:1006px;height:1px;background:#d9d9d9"></div>
<div class="a" style="left:221px;top:500px;width:1006px;height:1px;background:#d9d9d9"></div>
<div class="a" style="left:221px;top:521px;width:1006px;height:1px;background:#d9d9d9"></div>
<div class="a" style="left:221px;top:542px;width:1006px;height:1px;background:#d9d9d9"></div>
<div class="a" style="left:221px;top:563px;width:1006px;height:1px;background:#d9d9d9"></div>
<div class="a" style="left:221px;top:584px;width:1006px;height:1px;background:#d9d9d9"></div>
<div class="a" style="left:221px;top:605px;width:1006px;height:1px;background:#d9d9d9"></div>
<div class="a" style="left:221px;top:626px;width:1006px;height:1px;background:#d9d9d9"></div>
<div class="a" style="left:221px;top:647px;width:1006px;height:1px;background:#d9d9d9"></div>
<div class="a" style="left:221px;top:668px;width:1006px;height:1px;background:#d9d9d9"></div>
<div class="a" style="left:221px;top:689px;width:1006px;height:1px;background:#d9d9d9"></div>
<div class="a" style="left:221px;top:710px;width:1006px;height:1px;background:#d9d9d9"></div>
<div class="a" style="left:221px;top:731px;width:1006px;height:1px;background:#d9d9d9"></div>
<div class="a" style="left:221px;top:752px;width:1006px;height:1px;background:#d9d9d9"></div>
<div class="a" style="left:221px;top:773px;width:1006px;height:1px;background:#d9d9d9"></div>
<div class="a" style="left:202px;top:396px;width:1px;height:377px;background:#d0d0d0"></div>
<div class="a" style="left:285px;top:396px;width:1px;height:377px;background:#d9d9d9"></div>
<div class="a" style="left:360px;top:396px;width:1px;height:377px;background:#d9d9d9"></div>
<div class="a" style="left:445px;top:396px;width:1px;height:377px;background:#d9d9d9"></div>
<div class="a" style="left:576px;top:396px;width:1px;height:377px;background:#d9d9d9"></div>
<div class="a" style="left:757px;top:396px;width:1px;height:377px;background:#d9d9d9"></div>
<div class="a" style="left:882px;top:396px;width:1px;height:377px;background:#d9d9d9"></div>
<div class="a" style="left:957px;top:396px;width:1px;height:377px;background:#d9d9d9"></div>
<div class="a" style="left:1007px;top:396px;width:1px;height:377px;background:#d9d9d9"></div>
<div class="a" style="left:1107px;top:396px;width:1px;height:377px;background:#d9d9d9"></div>
<div class="a" style="left:1167px;top:396px;width:1px;height:377px;background:#d9d9d9"></div>
<div class="a" style="left:1227px;top:396px;width:1px;height:377px;background:#d9d9d9"></div>
<div class="a" style="left:221px;top:396px;width:1px;height:377px;background:#d9d9d9"></div>
<svg class="a" style="left:186px;top:756px" width="10" height="14"><path d="M3 3l4 4l-4 4z" fill="#777"/></svg>
<div class="a" style="left:1228px;top:396px;width:17px;height:377px;background:#fafafa"></div>
<div class="a" style="left:1228px;top:413px;width:17px;height:131px;background:#efefef"></div>
<div class="a" style="left:1229px;top:397px;width:15px;height:16px;background:#fff;border:1px solid #a8a8a8"></div>
<svg class="a" style="left:1229px;top:397px" width="15" height="16"><path d="M4 8.6h6.8l-3.4 -3.6z" fill="#777"/></svg>
<div class="a" style="left:1229px;top:544px;width:15px;height:213px;background:#fff;border:1px solid #a8a8a8"></div>
<div class="a" style="left:1229px;top:757px;width:15px;height:16px;background:#fff;border:1px solid #a8a8a8"></div>
<svg class="a" style="left:1229px;top:757px" width="15" height="16"><path d="M4 7h6.8l-3.4 3.8z" fill="#777"/></svg>
<div class="a" style="left:1245px;top:373px;width:1px;height:401px;background:#a8a8a8"></div>
<div class="a" style="left:0px;top:777px;width:1246px;height:21px;background:#f0f0f0"></div>
<div class="a" style="left:178px;top:774px;width:1068px;height:1px;background:#a6a6a6"></div>
<div class="a" style="left:178px;top:775px;width:1068px;height:2px;background:#d8d8d8"></div>
<svg class="a" style="left:0px;top:776px" width="28" height="22" viewBox="0 776 28 22">
<rect x="9.5" y="781.5" width="12.5" height="12" fill="#fff" stroke="#5a6ab8" stroke-width="1"/>
<path d="M12.6 784.5v9M15.6 784.5v9M18.6 784.5v9M9.5 787.5h12.5M9.5 790.5h12.5" stroke="#8a9ad8" stroke-width="0.9"/>
<rect x="9.2" y="781" width="13" height="4" rx="0.8" fill="#d85a4a"/>
<rect x="12.5" y="787.5" width="3.2" height="3" fill="none" stroke="#e01010" stroke-width="1"/>
<circle cx="19" cy="790.6" r="3.6" fill="#e0ecf8" stroke="#b02828" stroke-width="1.2"/>
<path d="M17.5 790.3h2v2" fill="none" stroke="#c02020" stroke-width="0.9"/>
</svg>
<div class="a" style="top:780.39px;font-size:11px;line-height:16px;color:#333;left:29px;">Tuesday, March 5, 2024  11:34 AM</div>
<div class="a" style="left:208px;top:779px;width:1px;height:18px;background:#d0d0d0"></div>
<svg class="a" style="left:210px;top:776px" width="30" height="22" viewBox="210 776 30 22">
<rect x="219.6" y="782.4" width="13.8" height="10.9" rx="1" fill="#fff" stroke="#6a80c0" stroke-width="1"/>
<path d="M222.5 785v6M224.5 785v6M226.5 785v6M228.5 785v6M230.5 785v6" stroke="#2a3040" stroke-width="1"/>
</svg>
<div class="a" style="top:780.39px;font-size:11px;line-height:16px;color:#333;left:239.5px;letter-spacing:0.257px;">Inventory</div>
<div class="a" style="left:298px;top:779px;width:1px;height:18px;background:#d0d0d0"></div>
<div class="a" style="top:780.39px;font-size:11px;line-height:16px;color:#333;left:304px;">Inventory Record :</div>
<div class="a" style="left:399px;top:778px;width:50px;height:21px;background:#fff;border:1px solid #a8a8a8"></div>
<div class="a" style="top:779.99px;font-size:11px;line-height:16px;color:#202020;left:404.5px;">138</div>
<div class="a" style="top:780.39px;font-size:11px;line-height:16px;color:#333;left:457px;letter-spacing:0.06px">Total Inventory Records :</div>
<div class="a" style="left:583px;top:778px;width:50px;height:21px;background:#fff;border:1px solid #a8a8a8"></div>
<div class="a" style="top:779.99px;font-size:11px;line-height:16px;color:#202020;left:588px;">29</div>
<div class="a" style="left:639px;top:779px;width:1px;height:18px;background:#d0d0d0"></div>
<div class="a" style="top:780.39px;font-size:11px;line-height:16px;color:#333;font-weight:bold;left:650px;letter-spacing:0.55px">Inventory Total Value :  $8,114.15</div>
<svg class="a" style="left:1030px;top:776px" width="80" height="22" viewBox="1030 776 80 22">
<rect x="1043.8" y="783.3" width="14.6" height="12" rx="0.8" fill="#fff" stroke="#333" stroke-width="1.1"/>
<path d="M1047.8 783.3v-2.6h6.6v2.6" fill="none" stroke="#333" stroke-width="1.1"/>
<path d="M1043.8 789 Q1051 790.5 1058.4 789" fill="none" stroke="#444" stroke-width="0.9"/>
<rect x="1049.3" y="788" width="3.6" height="3.4" fill="#f2d060" stroke="#e8702a" stroke-width="1"/>
<rect x="1044" y="779" width="1" height="18" fill="#d0d0d0" transform="translate(30,0)"/>
<path d="M1087 784 L1094 780.8 L1099 782.5 V793.5 L1094 795.2 L1087 792.5 Z" fill="#1a72d0"/>
<path d="M1090 785 L1094 784 V792 L1090 791 Z" fill="#fff"/>
<rect x="1093.8" y="785" width="7.2" height="4.8" fill="#e8501e"/>
<path d="M1096 786.5h2M1097 786.5v2" stroke="#fff" stroke-width="0.7"/>
</svg>
<div class="a" style="top:780.39px;font-size:11px;line-height:16px;color:#333;left:1105px;">Office 2019 Colorful - ( )</div>
<svg class="a" style="left:1230px;top:784px" width="14" height="12"><g fill="#b8b8b8"><rect x="9" y="2" width="2" height="2"/><rect x="5" y="6" width="2" height="2"/><rect x="9" y="6" width="2" height="2"/><rect x="1" y="10" width="2" height="2"/><rect x="5" y="10" width="2" height="2"/><rect x="9" y="10" width="2" height="2"/></g></svg>
</body></html>
